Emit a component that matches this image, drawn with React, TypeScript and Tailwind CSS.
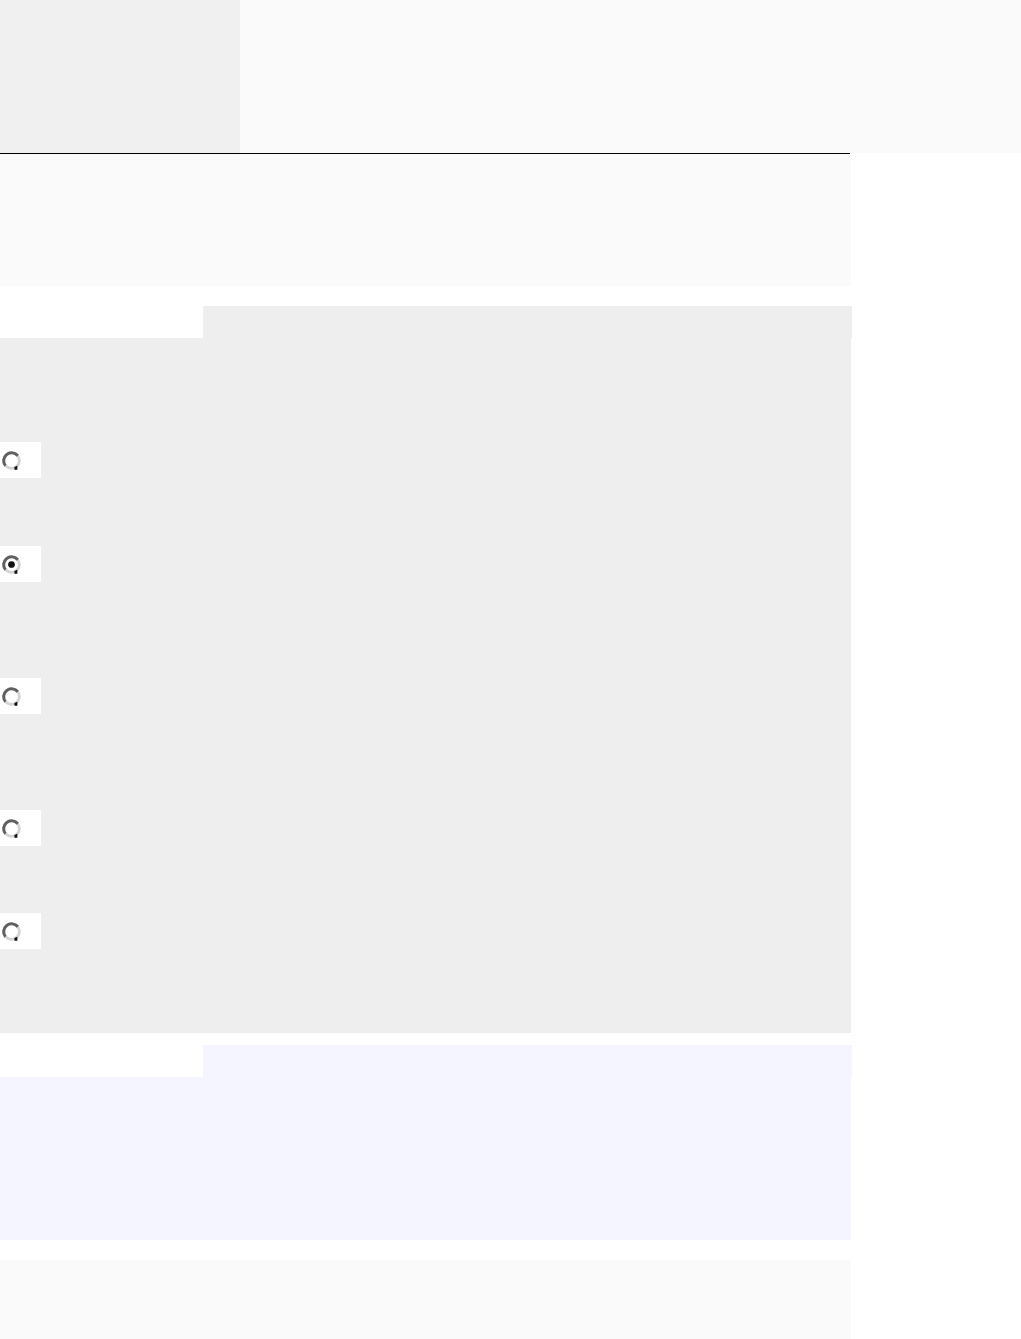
import React from 'react';

const options = [
  { id: 'a', checked: false, gap: 'mt-[104px]' },
  { id: 'b', checked: true, gap: 'mt-[68px]' },
  { id: 'c', checked: false, gap: 'mt-[96px]' },
  { id: 'd', checked: false, gap: 'mt-[96px]' },
  { id: 'e', checked: false, gap: 'mt-[67px]' },
];

function Radio({ checked }: { checked: boolean }) {
  return (
    <svg width="21" height="21" viewBox="0 0 20 20" className="block">
      <circle cx="10" cy="10" r="7.5" fill="#fff" stroke="#d4d4d4" strokeWidth="2.8" />
      <path d="M16 5.5 A7.5 7.5 0 0 0 4.2 15" fill="none" stroke="#5f5f5f" strokeWidth="2.8" />
      <path d="M12.8 16.2 L15.6 15 L15.6 18.8 L12.8 18.8 Z" fill="#111" />
      {checked && <circle cx="10" cy="10" r="3.2" fill="#111" />}
    </svg>
  );
}

export default function App() {
  return (
    <div className="min-h-[1339px] bg-white font-['Liberation_Sans',sans-serif]">
      <div className="flex h-[153px]">
        <div className="w-[240px] bg-[#f0f0f0]" />
        <div className="flex-1 bg-[#fafafa]" />
      </div>
      <div className="h-px w-[850px] bg-black" />
      <div className="h-[132px] w-[851px] bg-[#fafafa]" />

      <div className="mt-[20px] w-[852px]">
        <div className="flex h-[32px]">
          <div className="w-[203px] bg-white" />
          <div className="flex-1 bg-[#eeeeee]" />
        </div>
        <div className="flex h-[695px] w-[851px] flex-col bg-[#eeeeee]">
          {options.map((o) => (
            <div key={o.id} className={`${o.gap} flex h-[36px] w-[41px] items-center bg-white pl-[1px]`}>
              <Radio checked={o.checked} />
            </div>
          ))}
        </div>
      </div>

      <div className="mt-[12px] w-[852px]">
        <div className="flex h-[32px]">
          <div className="w-[203px] bg-white" />
          <div className="flex-1 bg-[#f5f5ff]" />
        </div>
        <div className="h-[163px] w-[851px] bg-[#f5f5ff]" />
      </div>

      <div className="mt-[20px] h-[79px] w-[851px] bg-[#fafafa]" />
    </div>
  );
}
